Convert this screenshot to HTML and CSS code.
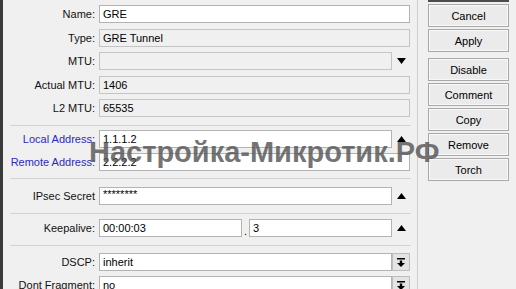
FILE: index.html
```html
<!DOCTYPE html>
<html lang="en">
<head>
    <meta charset="UTF-8">
    <meta name="viewport" content="width=device-width, initial-scale=1.0">
    <title>Interface &lt;gre-tunnel1&gt;</title>
    <link rel="stylesheet" href="styles.css">
</head>
<body>
    <div class="window">
        <div class="form">
            <div class="section s1">
                <div class="row">
                    <label>Name:</label>
                    <div class="field">GRE</div>
                </div>
                <div class="row">
                    <label>Type:</label>
                    <div class="field ro">GRE Tunnel</div>
                </div>
                <div class="row">
                    <label>MTU:</label>
                    <div class="control">
                        <div class="field ro"></div>
                        <span class="spin">
                            <svg width="9" height="6" viewBox="0 0 9 6"><path d="M0 0h9L4.5 6z" fill="#000"/></svg>
                        </span>
                    </div>
                </div>
                <div class="row">
                    <label>Actual MTU:</label>
                    <div class="field ro">1406</div>
                </div>
                <div class="row">
                    <label>L2 MTU:</label>
                    <div class="field ro">65535</div>
                </div>
            </div>

            <div class="section s2">
                <div class="row">
                    <label class="blue">Local Address:</label>
                    <div class="control">
                        <div class="field">1.1.1.2</div>
                        <span class="spin">
                            <svg width="9" height="6" viewBox="0 0 9 6"><path d="M0 6h9L4.5 0z" fill="#000"/></svg>
                        </span>
                    </div>
                </div>
                <div class="row">
                    <label class="blue">Remote Address:</label>
                    <div class="field">2.2.2.2</div>
                </div>
            </div>

            <div class="section s3">
                <div class="row">
                    <label>IPsec Secret</label>
                    <div class="control">
                        <div class="field secret">********</div>
                        <span class="spin">
                            <svg width="9" height="6" viewBox="0 0 9 6"><path d="M0 6h9L4.5 0z" fill="#000"/></svg>
                        </span>
                    </div>
                </div>
            </div>

            <div class="section s4">
                <div class="row">
                    <label>Keepalive:</label>
                    <div class="control">
                        <div class="field time">00:00:03</div>
                        <span class="dot">.</span>
                        <div class="field">3</div>
                        <span class="spin">
                            <svg width="9" height="6" viewBox="0 0 9 6"><path d="M0 6h9L4.5 0z" fill="#000"/></svg>
                        </span>
                    </div>
                </div>
            </div>

            <div class="section s5">
                <div class="row">
                    <label>DSCP:</label>
                    <div class="control">
                        <div class="field">inherit</div>
                        <span class="drop">
                            <svg width="8" height="9" viewBox="0 0 8 9"><path d="M0 0h8v1.5H0zM2.8 2.5h2.4v2.5H8L4 9 0 5h2.8z" fill="#000"/></svg>
                        </span>
                    </div>
                </div>
                <div class="row">
                    <label>Dont Fragment:</label>
                    <div class="control">
                        <div class="field">no</div>
                        <span class="drop">
                            <svg width="8" height="9" viewBox="0 0 8 9"><path d="M0 0h8v1.5H0zM2.8 2.5h2.4v2.5H8L4 9 0 5h2.8z" fill="#000"/></svg>
                        </span>
                    </div>
                </div>
            </div>
        </div>

        <div class="buttons">
            <button class="btn default">OK</button>
            <button class="btn">Cancel</button>
            <button class="btn">Apply</button>
            <button class="btn spaced">Disable</button>
            <button class="btn">Comment</button>
            <button class="btn">Copy</button>
            <button class="btn">Remove</button>
            <button class="btn">Torch</button>
        </div>

        <div class="watermark">Настройка-Микротик.РФ</div>
    </div>
</body>
</html>
```

FILE: styles.css
```css
body {
  margin: 0;
  padding: 0;
  background-color: #f0f0f0;
  color: #000;
  font-family: "Liberation Sans", Arial, sans-serif;
  font-size: 11px;
  overflow: hidden;
}
.window {
  position: relative;
  display: flex;
  height: 289px;
  border-left: 3px solid #3a3a3a;
  overflow: hidden;
}
/* Form */
.form {
  width: 414px;
  border-right: 1px solid #cfcfcf;
}
.section {
  display: flex;
  flex-direction: column;
  margin: 0 6px 0 7px;
  border-bottom: 1px solid #d3d3d3;
}
.s1 {
  padding: 5px 0 8px;
  gap: 5.5px;
}
.s2 {
  padding: 4px 0 7px;
  gap: 5px;
}
.s3 {
  padding: 8px 0 8px;
}
.s4 {
  padding: 5px 0 8px;
}
.s5 {
  padding: 7px 0 0;
  gap: 5px;
  border-bottom: none;
}
.row {
  display: grid;
  grid-template-columns: 85px 311px;
  column-gap: 4px;
  align-items: center;
  height: 18px;
}
.row label {
  justify-self: end;
  white-space: nowrap;
  color: #111;
}
.row label.blue {
  color: #2a2ac4;
}
.control {
  display: flex;
  align-items: center;
  height: 18px;
}
.field {
  flex: 1;
  box-sizing: border-box;
  height: 18px;
  line-height: 16px;
  padding: 0 3px;
  background-color: #fff;
  border: 1px solid #b3b3b3;
  white-space: nowrap;
  overflow: hidden;
}
.field.ro {
  background-color: #f0f0f0;
  border-color: #c4c4c4;
}
.field.secret {
  line-height: 12px;
}
.field.time {
  flex: 0 0 143px;
}
.dot {
  width: 7px;
  text-align: center;
  padding-top: 5px;
}
.spin {
  display: flex;
  justify-content: center;
  align-items: center;
  width: 18px;
  height: 18px;
}
.drop {
  display: flex;
  justify-content: center;
  align-items: center;
  box-sizing: border-box;
  width: 18px;
  height: 18px;
  background-color: #e4e4e4;
  border: 1px solid #bdbdbd;
}
/* Buttons */
.buttons {
  display: flex;
  flex-direction: column;
  gap: 2px;
  width: 81px;
  padding-left: 10px;
}
.btn {
  flex: none;
  box-sizing: border-box;
  height: 23px;
  padding: 0;
  font-family: "Liberation Sans", Arial, sans-serif;
  font-size: 11px;
  color: #000;
  background-color: #ebebeb;
  border: 1px solid #a8a8a8;
  box-shadow: inset 0 0 0 1px #f8f8f8;
  cursor: pointer;
}
.btn.default {
  margin-top: -21px;
  border: 2px solid #4c4c4c;
}
.btn.spaced {
  margin-top: 4px;
}
/* Watermark over the form */
.watermark {
  position: absolute;
  left: 86px;
  top: 138px;
  font-size: 29px;
  line-height: 29px;
  font-weight: bold;
  color: rgba(85, 85, 85, 0.82);
  white-space: nowrap;
  pointer-events: none;
}
```
